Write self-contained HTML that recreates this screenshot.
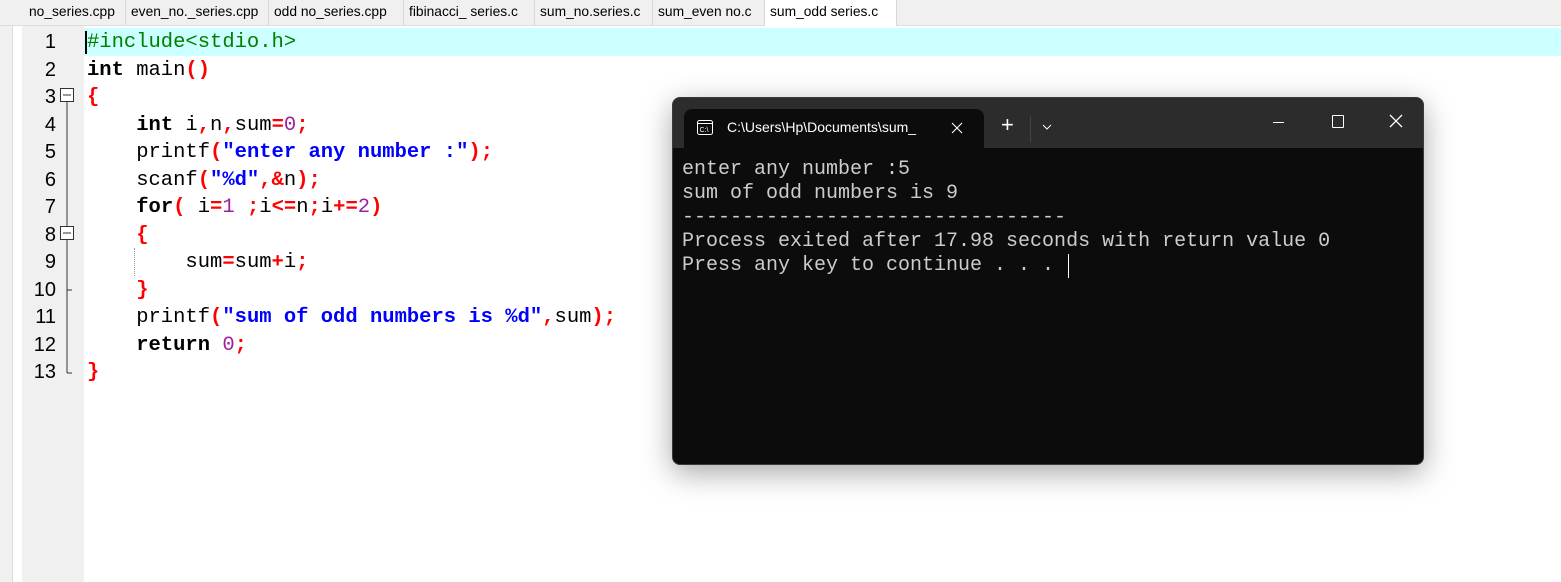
<!DOCTYPE html>
<html><head><style>
body{margin:0;width:1561px;height:582px;overflow:hidden;background:#fff;position:relative;font-family:"Liberation Sans",sans-serif}
.tabs{position:absolute;left:0;top:0;width:1561px;height:25px;background:#f0f0f0;border-bottom:1px solid #ddd}
.tab{position:absolute;top:0;height:25px;line-height:24px;font-size:13.8px;color:#000;border-right:1px solid #d8d8d8;padding:0 5px;box-sizing:border-box;white-space:nowrap;overflow:hidden}
.lstrip{position:absolute;left:0;top:26px;width:12px;height:556px;background:#f0f0f0;border-right:1px solid #ddd}
.gutter{position:absolute;left:22px;top:26px;width:62px;height:556px;background:#f0f0f0}
.hl{position:absolute;left:84px;top:28px;width:1477px;height:28px;background:#ccffff}
.code{position:absolute;left:87px;top:29px;font-family:"Liberation Mono",monospace;font-size:20.5px;line-height:27.5px;white-space:pre;color:#000}
.nums{position:absolute;left:22px;top:29px;width:34px;text-align:right;font-family:"Liberation Sans",sans-serif;font-size:20px;line-height:27.5px;color:#000}
b{font-weight:bold}
.r{color:#f00;font-weight:bold}.g{color:#008000}.p{color:#a020a0}.bl{color:#00f;font-weight:bold}
.term{position:absolute;left:672px;top:97px;width:752px;height:368px;border-radius:8px;background:#0c0c0c;overflow:hidden;box-shadow:0 8px 30px rgba(0,0,0,.35);border:1px solid #3a3a3a;box-sizing:border-box}
.tbar{position:absolute;left:0;top:0;width:100%;height:50px;background:#2c2c2c}
.ttab{position:absolute;left:11px;top:11px;width:300px;height:39px;background:#0c0c0c;border-radius:8px 8px 0 0;color:#fff;font-size:14px}
.tout{position:absolute;left:9px;top:60px;font-family:"Liberation Mono",monospace;font-size:20px;line-height:24px;color:#cccccc;white-space:pre}
</style></head><body>
<div class="tabs">
<div class="tab" style="left:24px;width:102px">no_series.cpp</div>
<div class="tab" style="left:126px;width:143px">even_no._series.cpp</div>
<div class="tab" style="left:269px;width:135px">odd no_series.cpp</div>
<div class="tab" style="left:404px;width:131px">fibinacci_ series.c</div>
<div class="tab" style="left:535px;width:118px">sum_no.series.c</div>
<div class="tab" style="left:653px;width:112px">sum_even no.c</div>
<div class="tab" style="left:765px;width:132px;background:#fff;height:26px">sum_odd series.c</div>
</div>
<div class="lstrip"></div>
<div class="gutter"></div>
<div class="hl"></div>
<div style="position:absolute;left:85px;top:31px;width:2px;height:23px;background:#000"></div>
<div class="nums">1<br>2<br>3<br>4<br>5<br>6<br>7<br>8<br>9<br>10<br>11<br>12<br>13</div>
<svg style="position:absolute;left:55px;top:86px" width="24" height="300">
<rect x="5.5" y="2.5" width="13" height="13" fill="#fff" stroke="#333"/><line x1="8" y1="9" x2="16" y2="9" stroke="#333"/>
<line x1="12" y1="16" x2="12" y2="140" stroke="#333"/>
<rect x="5.5" y="140.5" width="13" height="13" fill="#fff" stroke="#333"/><line x1="8" y1="147" x2="16" y2="147" stroke="#333"/>
<line x1="12" y1="154" x2="12" y2="287" stroke="#333"/>
<line x1="12" y1="204" x2="17" y2="204" stroke="#333"/>
<line x1="12" y1="287" x2="17" y2="287" stroke="#333"/>
</svg>
<div style="position:absolute;left:134px;top:248px;height:28px;border-left:1px dotted #999"></div>
<div class="code"><span class="g">#include&lt;stdio.h&gt;</span>
<b>int</b> main<span class="r">()</span>
<span class="r">{</span>
    <b>int</b> i<span class="r">,</span>n<span class="r">,</span>sum<span class="r">=</span><span class="p">0</span><span class="r">;</span>
    printf<span class="r">(</span><span class="bl">"enter any number :"</span><span class="r">);</span>
    scanf<span class="r">(</span><span class="bl">"%d"</span><span class="r">,&amp;</span>n<span class="r">);</span>
    <b>for</b><span class="r">(</span> i<span class="r">=</span><span class="p">1</span> <span class="r">;</span>i<span class="r">&lt;=</span>n<span class="r">;</span>i<span class="r">+=</span><span class="p">2</span><span class="r">)</span>
    <span class="r">{</span>
        sum<span class="r">=</span>sum<span class="r">+</span>i<span class="r">;</span>
    <span class="r">}</span>
    printf<span class="r">(</span><span class="bl">"sum of odd numbers is %d"</span><span class="r">,</span>sum<span class="r">);</span>
    <b>return</b> <span class="p">0</span><span class="r">;</span>
<span class="r">}</span></div>
<div class="term">
<div class="tbar">
<div class="ttab">
<svg style="position:absolute;left:13px;top:11px" width="16" height="16"><rect x="0.5" y="0.5" width="15" height="14" rx="2" fill="none" stroke="#fff"/><line x1="1" y1="3.5" x2="15" y2="3.5" stroke="#fff"/><text x="2.5" y="12" font-size="7" fill="#fff" font-family="Liberation Sans">C:\</text></svg>
<span style="position:absolute;left:43px;top:10px">C:\Users\Hp\Documents\sum_</span>
<svg style="position:absolute;left:267px;top:13px" width="12" height="12"><path d="M1 1L11 11M11 1L1 11" stroke="#fff" stroke-width="1.1"/></svg>
</div>
<span style="position:absolute;left:328px;top:14px;color:#fff;font-size:22px">+</span>
<div style="position:absolute;left:357px;top:18px;width:1px;height:26px;background:#444"></div>
<svg style="position:absolute;left:369px;top:26px" width="10" height="6"><path d="M1 1L5 5L9 1" stroke="#fff" fill="none"/></svg>
<div style="position:absolute;left:600px;top:24px;width:11px;height:1px;background:#fff"></div>
<div style="position:absolute;left:659px;top:17px;width:10px;height:11px;border:1px solid #fff;border-radius:1px"></div>
<svg style="position:absolute;left:716px;top:16px" width="14" height="14"><path d="M1 1L13 13M13 1L1 13" stroke="#fff" stroke-width="1.3"/></svg>
</div>
<div class="tout">enter any number :5
sum of odd numbers is 9
--------------------------------
Process exited after 17.98 seconds with return value 0
Press any key to continue . . . </div>
<div style="position:absolute;left:395px;top:156px;width:1px;height:24px;background:#fff"></div>
</div>
</body></html>
